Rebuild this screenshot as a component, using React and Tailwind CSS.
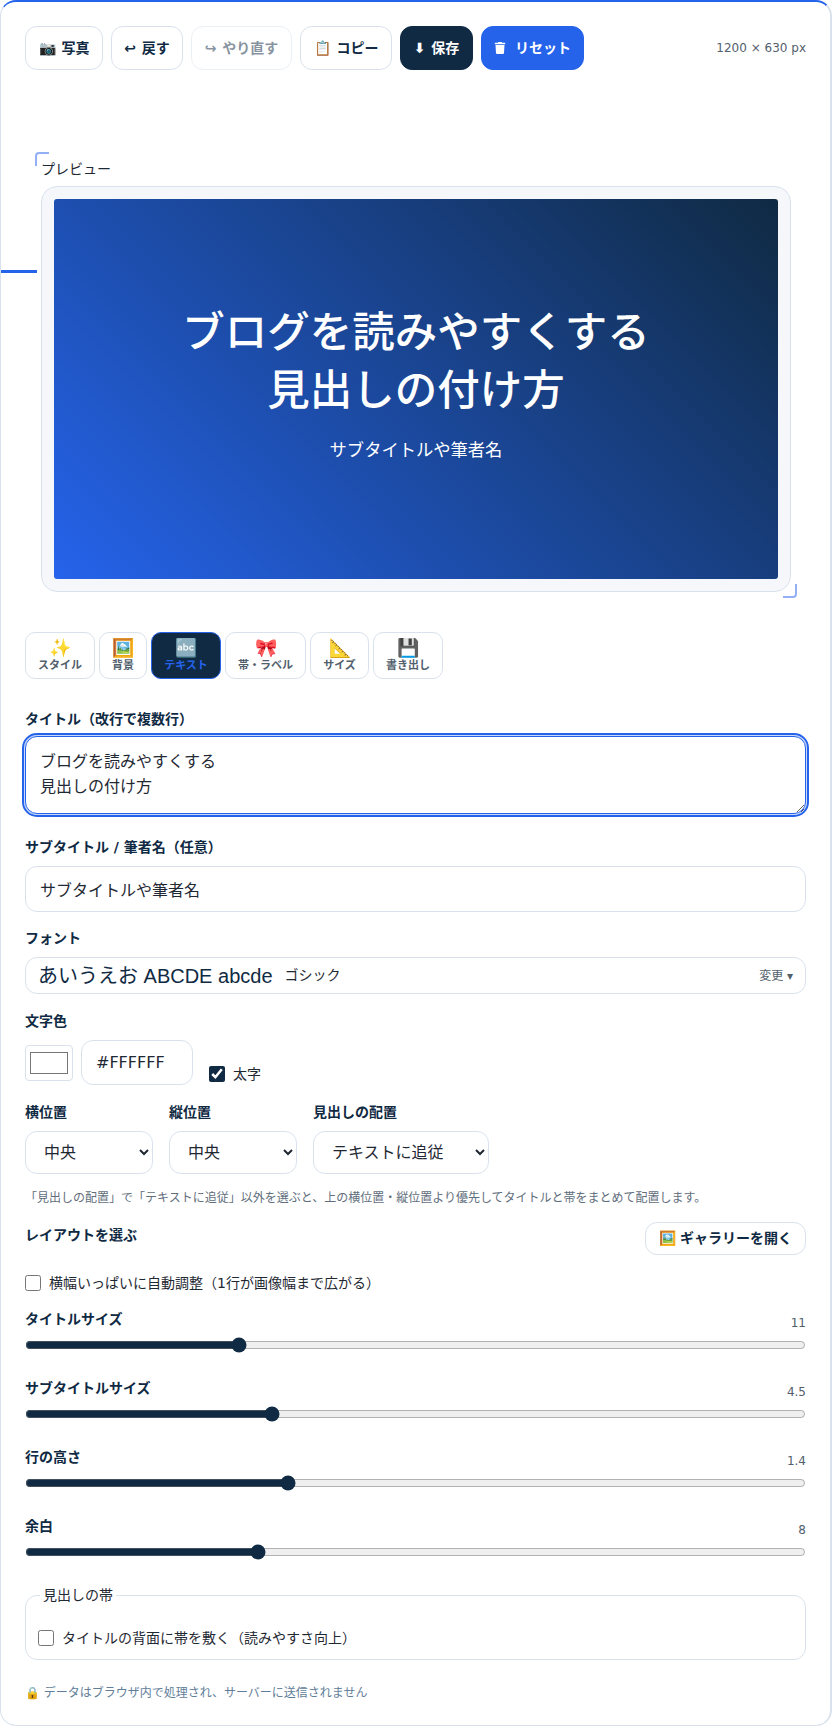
import { useState } from 'react';
import { FaTrash } from 'react-icons/fa';

const TOOLBAR = [
  { icon: '📷', label: '写真', className: 'w-[78px] border-[#d9e2ec] bg-white text-[#102a43]' },
  { icon: '↩', label: '戻す', className: 'w-[72px] border-[#d9e2ec] bg-white text-[#102a43]' },
  { icon: '↪', label: 'やり直す', className: 'w-[101px] border-[#d9e2ec] bg-white text-[#102a43] opacity-50' },
  { icon: '📋', label: 'コピー', className: 'w-[92px] border-[#d9e2ec] bg-white text-[#102a43]' },
  { icon: '⬇', label: '保存', className: 'w-[73px] border-[#102a43] bg-[#102a43] text-white' },
  { icon: <FaTrash size={12} />, label: 'リセット', className: 'w-[103px] border-[#2563eb] bg-[#2563eb] text-white gap-[9px]' },
];

const TABS = [
  { icon: '✨', label: 'スタイル', width: 'w-[70px]' },
  { icon: '🖼️', label: '背景', width: 'w-[48px]' },
  { icon: '🔤', label: 'テキスト', width: 'w-[70px]', active: true },
  { icon: '🎀', label: '帯・ラベル', width: 'w-[81px]' },
  { icon: '📐', label: 'サイズ', width: 'w-[59px]' },
  { icon: '💾', label: '書き出し', width: 'w-[70px]' },
];

const SLIDERS = [
  { label: 'タイトルサイズ', value: 11, min: 4, max: 30, step: 1 },
  { label: 'サブタイトルサイズ', value: 4.5, min: 2, max: 10, step: 0.5 },
  { label: '行の高さ', value: 1.4, min: 1, max: 2.2, step: 0.1 },
  { label: '余白', value: 8, min: 3, max: 20, step: 1 },
];

function Label({ children, className = '' }) {
  return <div className={`text-[14px] leading-[20px] font-bold text-[#102a43] ${className}`}>{children}</div>;
}

function Slider({ label, value, min, max, step }) {
  return (
    <div className="h-[69px]">
      <div className="flex justify-between">
        <Label>{label}</Label>
        <span className="mt-[4px] text-[12px] leading-[20px] text-[#52606d]">{value}</span>
      </div>
      <input
        type="range"
        readOnly
        defaultValue={value}
        min={min}
        max={max}
        step={step}
        className="mt-[4px] block h-[16px] w-full accent-[#102a43]"
      />
    </div>
  );
}

export default function App() {
  const [title, setTitle] = useState('ブログを読みやすくする\n見出しの付け方');
  const [subtitle, setSubtitle] = useState('サブタイトルや筆者名');

  return (
    <div className="relative h-[1726px] w-[832px] overflow-hidden rounded-2xl border border-r-2 border-[#d9e2ec] border-t-2 border-t-[#2563eb] bg-white px-[24px] pt-[24px] [font-family:'DejaVu_Sans','Noto_Sans_CJK_JP',sans-serif] [text-spacing-trim:space-all] text-[#102a43]">

      {/* Toolbar */}
      <div className="flex items-center">
        <div className="flex gap-2">
          {TOOLBAR.map((b) => (
            <button key={b.label} className={`flex h-[44px] items-center justify-center gap-[6px] rounded-xl border text-[14px] font-bold ${b.className}`}>
              <span>{b.icon}</span>
              <span>{b.label}</span>
            </button>
          ))}
        </div>
        <span className="ml-auto text-[12px] text-[#52606d]">1200 × 630 px</span>
      </div>

      {/* Preview */}
      <div className="relative mt-[86px] ml-[16px] w-[750px]">
        <div className="h-[30px] pt-[1px] text-[14px] leading-[24px] text-[#1f2933]">プレビュー</div>
        <div className="rounded-2xl border border-[#d9e2ec] bg-[#f5f7fb] p-[12px]">
          <div className="flex h-[380px] flex-col items-center justify-center rounded-[3px] bg-[linear-gradient(45deg,#2563eb,#102a43)] pb-[12px] text-white">
            <div className="text-center text-[42.5px] leading-[57.5px] font-medium whitespace-pre-line">{title}</div>
            <div className="mt-[19px] text-[17.3px] leading-[24px]">{subtitle}</div>
          </div>
        </div>
        <span className="absolute top-[-4px] left-[-6px] h-[14px] w-[14px] rounded-tl-[4px] border-t-2 border-l-2 border-[#93b0f5]" />
        <span className="absolute right-[-6px] bottom-[-6px] h-[14px] w-[14px] rounded-br-[4px] border-r-2 border-b-2 border-[#93b0f5]" />
      </div>
      <span className="absolute top-[268px] left-[-1px] h-[3px] w-[37px] bg-[#2563eb]" />

      {/* Tabs */}
      <div className="mt-[40px] flex gap-1">
        {TABS.map((t) => (
          <button
            key={t.label}
            className={`flex h-[47px] flex-col items-center justify-center rounded-[10px] border text-[11px] leading-[16px] font-bold ${t.width} ${t.active ? 'border-[#2563eb] bg-[#102a43] text-[#2563eb]' : 'border-[#d9e2ec] bg-white text-[#52606d]'}`}
          >
            <span className="text-[18px] leading-[20px]">{t.icon}</span>
            <span>{t.label}</span>
          </button>
        ))}
      </div>

      {/* Title */}
      <Label className="mt-[30px]">タイトル（改行で複数行）</Label>
      <textarea
        value={title}
        onChange={(e) => setTitle(e.target.value)}
        className="mt-[7px] block h-[78px] w-full rounded-xl border border-[#2563eb] bg-white px-[14px] py-[12px] text-[16px] leading-[25px] text-[#1f2933] shadow-[0_0_0_1px_#c9d8fb] outline-2 outline-offset-1 outline-[#2563eb]"
      />

      <Label className="mt-[23px]">サブタイトル / 筆者名（任意）</Label>
      <input
        value={subtitle}
        onChange={(e) => setSubtitle(e.target.value)}
        className="mt-[9px] block h-[46px] w-full rounded-xl border border-[#d9e2ec] px-[14px] text-[16px] text-[#1f2933]"
      />

      {/* Font */}
      <Label className="mt-[16px]">フォント</Label>
      <div className="mt-[9px] flex h-[37px] w-full items-center rounded-xl border border-[#d9e2ec] px-[12px]">
        <span className="[font-family:'Liberation_Sans','Noto_Sans_CJK_JP',sans-serif] text-[20px] text-[#102a43]">あいうえお ABCDE abcde</span>
        <span className="ml-[12px] text-[14px] text-[#1f2933]">ゴシック</span>
        <span className="ml-auto text-[12px] text-[#52606d]">変更 ▾</span>
      </div>

      {/* Text colour */}
      <Label className="mt-[17px]">文字色</Label>
      <div className="mt-[9px] flex items-start">
        <div className="mt-[5px] flex h-[36px] w-[48px] items-center justify-center rounded-[4px] border border-[#d9e2ec] bg-white">
          <span className="h-[22px] w-[38px] border border-[#767676] bg-white" />
        </div>
        <div className="ml-[8px] flex h-[45px] w-[112px] items-center rounded-xl border border-[#d9e2ec] px-[14px] text-[16px] text-[#1f2933]">#FFFFFF</div>
        <label className="mt-[24px] ml-[16px] flex h-[20px] items-center gap-2 text-[14px] text-[#1f2933]">
          <input type="checkbox" defaultChecked className="h-4 w-4 accent-[#102a43]" />
          太字
        </label>
      </div>

      {/* Position */}
      <div className="mt-[17px] flex gap-4">
        {[
          { label: '横位置', value: '中央', width: 'w-[128px]' },
          { label: '縦位置', value: '中央', width: 'w-[128px]' },
          { label: '見出しの配置', value: 'テキストに追従', width: 'w-[176px]' },
        ].map((s) => (
          <div key={s.label}>
            <Label>{s.label}</Label>
            <select defaultValue={s.value} className={`mt-[9px] block h-[43px] rounded-xl border border-[#d9e2ec] bg-white px-[14px] text-[16px] text-[#1f2933] ${s.width}`}>
              <option>{s.value}</option>
            </select>
          </div>
        ))}
      </div>
      <p className="mt-[15px] text-[12px] leading-[18px] text-[#616e7c]">「見出しの配置」で「テキストに追従」以外を選ぶと、上の横位置・縦位置より優先してタイトルと帯をまとめて配置します。</p>

      {/* Layout */}
      <div className="mt-[15px] flex items-start justify-between">
        <Label className="mt-[3px]">レイアウトを選ぶ</Label>
        <button className="flex h-[33px] w-[161px] items-center justify-center gap-[4px] rounded-xl border border-[#d9e2ec] text-[14px] font-bold">
          <span>🖼️</span>
          <span>ギャラリーを開く</span>
        </button>
      </div>
      <label className="mt-[17px] flex items-center gap-2 text-[14px] leading-[22px] text-[#1f2933]">
        <input type="checkbox" className="h-4 w-4" />
        横幅いっぱいに自動調整（1行が画像幅まで広がる）
      </label>

      {/* Sliders */}
      <div className="mt-[15px]">
        {SLIDERS.map((s) => (
          <Slider key={s.label} {...s} />
        ))}
      </div>

      {/* Band */}
      <fieldset className="mt-[1px] h-[74px] rounded-xl border border-[#d9e2ec] px-[12px]">
        <legend className="ml-[2px] px-[3px] text-[14px] leading-[18px] text-[#1f2933]">見出しの帯</legend>
        <label className="mt-[23px] flex items-center gap-2 text-[14px] leading-[22px] text-[#1f2933]">
          <input type="checkbox" className="h-4 w-4" />
          タイトルの背面に帯を敷く（読みやすさ向上）
        </label>
      </fieldset>

      <p className="mt-[24px] text-[12px] leading-[18px] text-[#627d98]">🔒 データはブラウザ内で処理され、サーバーに送信されません</p>
    </div>
  );
}
